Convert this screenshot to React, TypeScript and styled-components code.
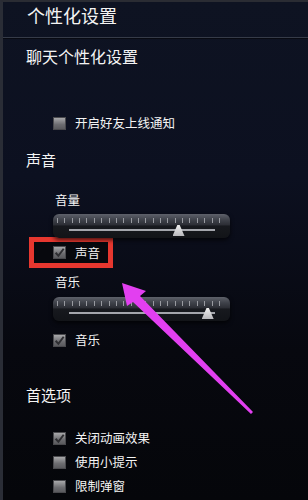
import React from 'react';
import styled, { createGlobalStyle } from 'styled-components';

const GlobalStyle = createGlobalStyle`
  html, body {
    margin: 0;
    padding: 0;
    background: #05060a;
  }
  body {
    font-family: "Noto Sans CJK SC", "Noto Sans", sans-serif;
  }
`;

const Page = styled.div`
  position: relative;
  width: 308px;
  height: 500px;
  overflow: hidden;
  box-sizing: border-box;
  border-left: 3px solid #2a2d36;
  border-top: 2px solid #2a2c33;
  background: linear-gradient(#0e1322 0, #0c1020 35%, #07080f 70%, #05060a 100%);
  color: #f4f4f4;
`;

const Header = styled.div`
  height: 36px;
  box-sizing: border-box;
  padding: 2px 0 0 24px;
  font-size: 18px;
  line-height: 22px;
  border-bottom: 1px solid #363b48;
  box-shadow: 0 1px 0 #080a12;
`;

const Content = styled.div`
  display: flex;
  flex-direction: column;
  align-items: flex-start;
  padding-left: 23px;
`;

const SectionTitle = styled.div<{ $top: number; $size?: number }>`
  margin-top: ${p => p.$top}px;
  font-size: ${p => p.$size ?? 15}px;
  line-height: 20px;
`;

const SubLabel = styled.div<{ $top: number }>`
  margin: ${p => p.$top}px 0 0 29px;
  font-size: 12.5px;
  line-height: 16px;
`;

const Row = styled.div<{ $top?: number }>`
  display: flex;
  align-items: center;
  gap: 9px;
  margin: ${p => p.$top ?? 0}px 0 0 27px;
  height: 16px;
  font-size: 12.5px;
  line-height: 16px;
`;

const Box = styled.span`
  display: flex;
  align-items: center;
  justify-content: center;
  width: 13px;
  height: 13px;
  box-sizing: border-box;
  border: 1px solid #4a4a4e;
  background: linear-gradient(#a8a8aa, #6c6c70 60%, #5a5a5e);
`;

const Highlight = styled.div`
  margin: -1px 0 0 3px;
  width: 84px;
  height: 31px;
  box-sizing: border-box;
  border: 5px solid #e6372f;
  display: flex;
  align-items: center;
  background: #07080d;

  ${Row} {
    margin-left: 19px;
  }
`;

const SliderBody = styled.div<{ $top: number }>`
  position: relative;
  margin: ${p => p.$top}px 0 0 27px;
  width: 177px;
  height: 24px;
  box-sizing: border-box;
  border-radius: 6px;
  background: linear-gradient(#5e616a 0, #3e4149 25%, #2c2e35 45%, #17191e 50%, #121418 100%);
  box-shadow: 0 2px 4px rgba(0, 0, 0, 0.7);
  display: flex;
  flex-direction: column;
`;

const Ticks = styled.div`
  display: flex;
  justify-content: space-between;
  margin: 4px 10px 0 4px;
  height: 5px;
`;

const Tick = styled.span`
  width: 1px;
  height: 5px;
  background: #989aa0;
`;

const TrackLine = styled.div`
  margin: 6px 15px 0 16px;
  height: 2px;
  background: #a4a6ac;
`;

const Thumb = styled.span`
  position: absolute;
  top: 11px;
  width: 12px;
  height: 11px;
  margin-left: -6px;
  background: linear-gradient(#f0f0f0, #b8b8bc);
  clip-path: polygon(40% 0, 60% 0, 100% 100%, 0 100%);
`;

const Overlay = styled.svg`
  position: absolute;
  left: -3px;
  top: -2px;
  pointer-events: none;
`;

const Checkbox: React.FC<{ checked?: boolean }> = ({ checked }) => (
  <Box>
    {checked && (
      <svg width="11" height="11" viewBox="0 0 10 10">
        <path d="M1.5 5.2 L4 8 L8.8 1.6" fill="none" stroke="#2e2e32" strokeWidth="1.8" />
      </svg>
    )}
  </Box>
);

const Slider: React.FC<{ top: number; value: number }> = ({ top, value }) => (
  <SliderBody $top={top}>
    <Ticks>
      {Array.from({ length: 23 }).map((_, i) => (
        <Tick key={i} />
      ))}
    </Ticks>
    <TrackLine />
    <Thumb style={{ left: 16 + value * 146 }} />
  </SliderBody>
);

export default function App() {
  return (
    <>
      <GlobalStyle />
      <Page>
        <Header>个性化设置</Header>
        <Content>
          <SectionTitle $top={8} $size={16}>聊天个性化设置</SectionTitle>
          <Row $top={49}>
            <Checkbox />
            开启好友上线通知
          </Row>

          <SectionTitle $top={19}>声音</SectionTitle>
          <SubLabel $top={22}>音量</SubLabel>
          <Slider top={6} value={0.75} />
          <Highlight>
            <Row>
              <Checkbox checked />
              声音
            </Row>
          </Highlight>
          <SubLabel $top={6}>音乐</SubLabel>
          <Slider top={7} value={0.95} />
          <Row $top={11}>
            <Checkbox checked />
            音乐
          </Row>

          <SectionTitle $top={37}>首选项</SectionTitle>
          <Row $top={25}>
            <Checkbox checked />
            关闭动画效果
          </Row>
          <Row $top={8}>
            <Checkbox />
            使用小提示
          </Row>
          <Row $top={8}>
            <Checkbox />
            限制弹窗
          </Row>
        </Content>
        <Overlay width="308" height="500" viewBox="0 0 308 500">
          <polygon
            points="122,283 146,291 140,296 253,412 251,414 133,302 127,306"
            fill="#e23ff0"
          />
        </Overlay>
      </Page>
    </>
  );
}
